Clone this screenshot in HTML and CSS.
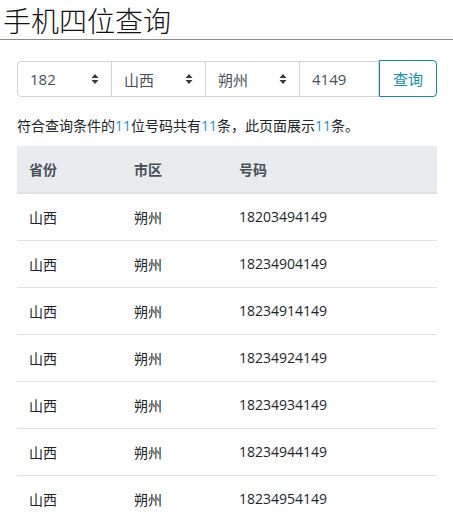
FILE: index.html
```html
<!DOCTYPE html>
<html lang="zh-CN">
<head>
  <meta charset="UTF-8">
  <meta name="viewport" content="width=device-width, initial-scale=1">
  <title>手机四位查询</title>
  <link rel="stylesheet" href="styles.css">
</head>
<body>

  <h1 class="page-title">手机四位查询</h1>

  <div class="container">
    <form class="query-form">
      <div class="select-wrap">
        <select class="form-control num">
          <option>182</option>
        </select>
        <svg class="caret" width="8" height="12" viewBox="0 0 8 12"><path d="M4 1 L7.5 5 H0.5 Z M4 11 L7.5 7 H0.5 Z" fill="#343a40"/></svg>
      </div>
      <div class="select-wrap">
        <select class="form-control">
          <option>山西</option>
        </select>
        <svg class="caret" width="8" height="12" viewBox="0 0 8 12"><path d="M4 1 L7.5 5 H0.5 Z M4 11 L7.5 7 H0.5 Z" fill="#343a40"/></svg>
      </div>
      <div class="select-wrap">
        <select class="form-control">
          <option>朔州</option>
        </select>
        <svg class="caret" width="8" height="12" viewBox="0 0 8 12"><path d="M4 1 L7.5 5 H0.5 Z M4 11 L7.5 7 H0.5 Z" fill="#343a40"/></svg>
      </div>
      <input class="form-control num num-input" type="text" value="4149">
      <button type="submit" class="btn-query">查询</button>
    </form>

    <p class="summary">符合查询条件的<span class="hl">11</span>位号码共有<span class="hl">11</span>条，此页面展示<span class="hl">11</span>条。</p>

    <table class="result-table">
      <thead>
        <tr><th>省份</th><th>市区</th><th>号码</th></tr>
      </thead>
      <tbody>
        <tr><td>山西</td><td>朔州</td><td class="num">18203494149</td></tr>
        <tr><td>山西</td><td>朔州</td><td class="num">18234904149</td></tr>
        <tr><td>山西</td><td>朔州</td><td class="num">18234914149</td></tr>
        <tr><td>山西</td><td>朔州</td><td class="num">18234924149</td></tr>
        <tr><td>山西</td><td>朔州</td><td class="num">18234934149</td></tr>
        <tr><td>山西</td><td>朔州</td><td class="num">18234944149</td></tr>
        <tr><td>山西</td><td>朔州</td><td class="num">18234954149</td></tr>
      </tbody>
    </table>
  </div>

</body>
</html>
```

FILE: styles.css
```css
body {
  font-family: "Noto Sans CJK SC", sans-serif;
  font-size: 14px;
  color: #212529;
  background-color: #fff;
  margin: 0;
  padding: 0;
}

.num,
.hl {
  font-family: "Open Sans", "Noto Sans CJK SC", sans-serif;
}

.page-title {
  font-weight: 300;
  font-size: 28px;
  line-height: 36px;
  color: #111;
  margin: 0;
  padding: 2px 0 1px 3px;
  border-bottom: 1px solid #8a8a8a;
}

.container {
  padding: 21px 16px 0 17px;
}

.query-form {
  display: flex;
  height: 36px;
}

.select-wrap {
  position: relative;
  width: 95px;
  flex: none;
}

.select-wrap + .select-wrap {
  margin-left: -1px;
}

.caret {
  position: absolute;
  right: 13px;
  top: 12px;
  pointer-events: none;
}

.form-control {
  box-sizing: border-box;
  height: 36px;
  width: 100%;
  padding: 0 12px;
  font-family: "Noto Sans CJK SC", sans-serif;
  font-size: 15px;
  color: #495057;
  background: #fff;
  border: 1px solid #ced4da;
  border-radius: 0;
  -webkit-appearance: none;
  appearance: none;
  outline: none;
}

.form-control.num {
  font-family: "Open Sans", sans-serif;
}

.select-wrap:first-child .form-control {
  border-radius: 4px 0 0 4px;
}

.num-input {
  width: 80px;
  flex: none;
  margin-left: -1px;
}

.btn-query {
  flex: 1;
  height: 37px;
  margin-top: -1px;
  font-family: "Noto Sans CJK SC", sans-serif;
  font-size: 15px;
  color: #138ea2;
  background: #fff;
  border: 1px solid #17879a;
  border-radius: 0 4px 4px 0;
  cursor: pointer;
}

.summary {
  margin: 18px 0 10px;
  line-height: 21px;
}

.hl {
  color: #2b8fc4;
}

.result-table {
  width: 420px;
  border-collapse: collapse;
}

.result-table th,
.result-table td {
  text-align: left;
  padding: 12px;
  line-height: 22px;
  width: 81px;
}

.result-table th:last-child,
.result-table td:last-child {
  width: auto;
}

.result-table th {
  background-color: #e9ecef;
  color: #495057;
  font-weight: bold;
  border-bottom: 2px solid #dee2e6;
}

.result-table td {
  border-top: 1px solid #dee2e6;
}

.result-table tbody tr:first-child td {
  border-top: none;
}
```
